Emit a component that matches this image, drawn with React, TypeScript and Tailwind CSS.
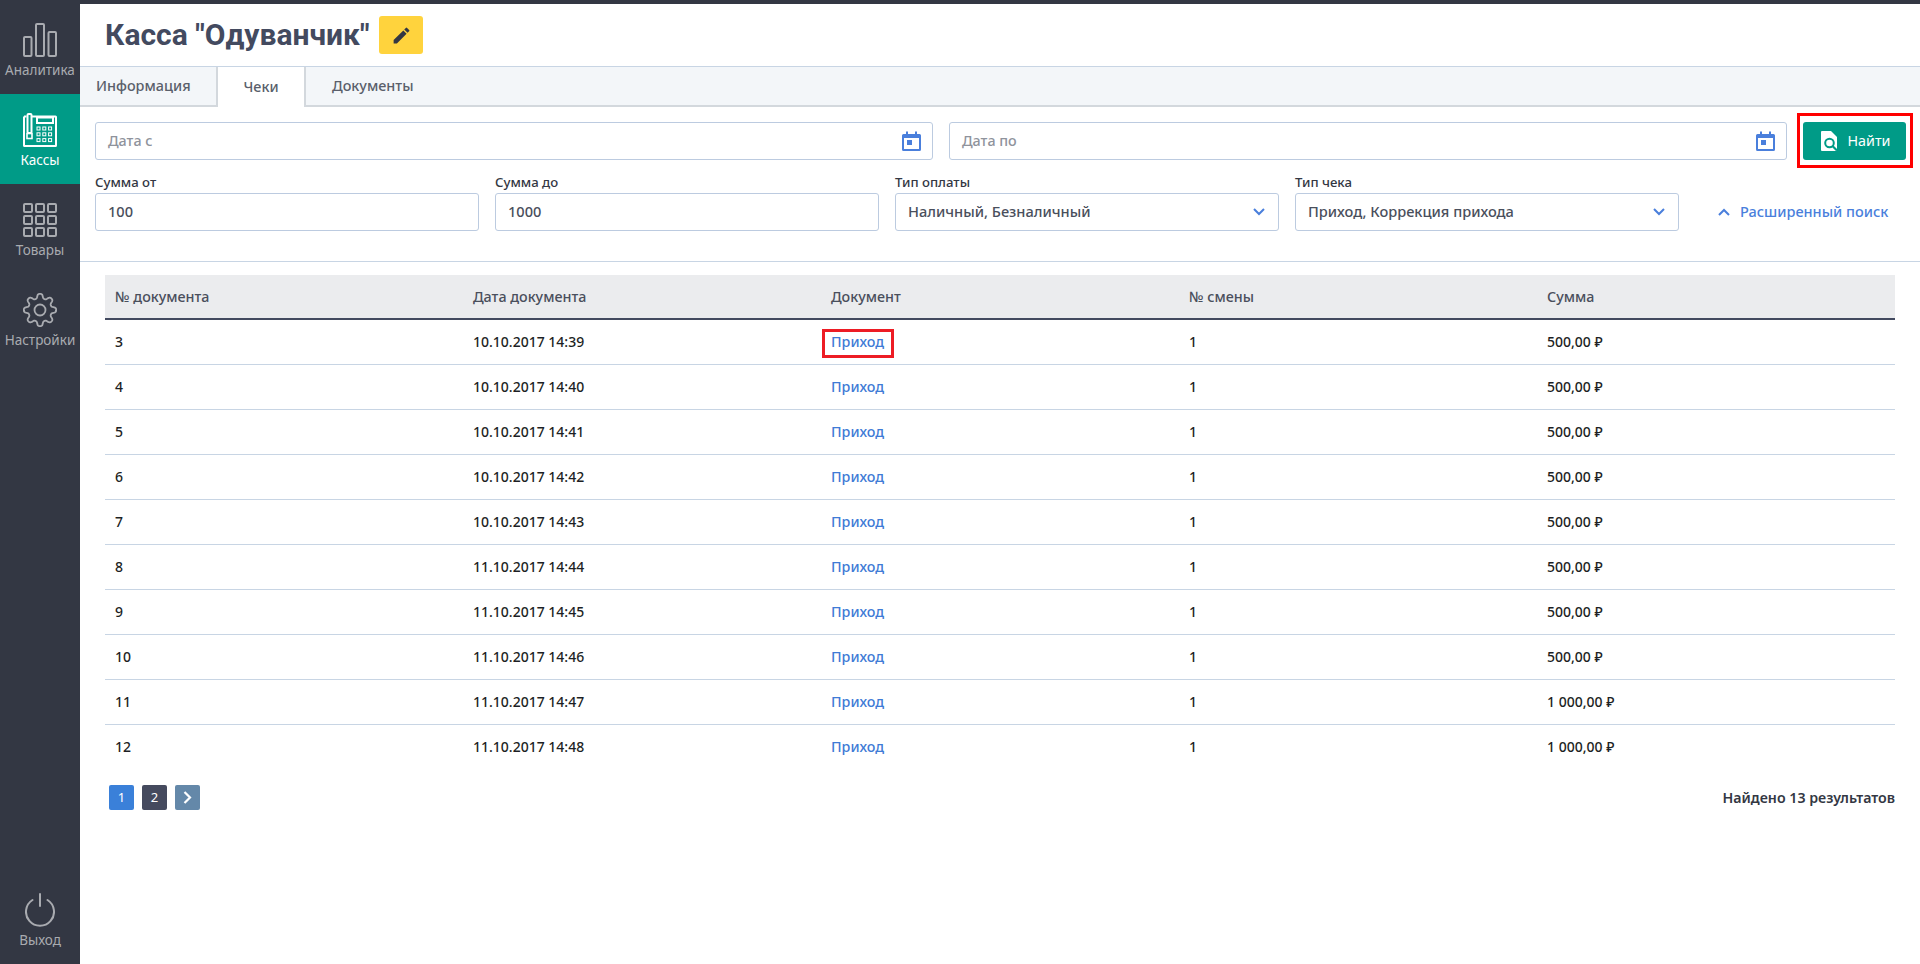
import React from "react";

const NS = "font-['Noto_Sans',sans-serif]";

function Analytics() {
  return (
    <svg width="34" height="34" viewBox="0 0 34 34" fill="none" stroke="currentColor" strokeWidth="2">
      <rect x="1" y="14" width="7.500" height="19" rx="1" />
      <rect x="13" y="1" width="8" height="32" rx="1" />
      <rect x="25.500" y="9" width="7.500" height="24" rx="1" />
    </svg>
  );
}
function Phone() {
  const keys: React.ReactNode[] = [];
  for (let r = 0; r < 3; r++)
    for (let c = 0; c < 3; c++)
      keys.push(<rect key={`${r}-${c}`} x={14 + c * 5.800} y={14 + r * 5.800} width="3" height="3" fill="none" stroke="#fff" strokeWidth="1" />);
  return (
    <svg width="34" height="34" viewBox="0 0 34 34" fill="none">
      <path d="M1 3.500h2.500M8.500 3.500h24a.5.5 0 0 1 .5.5v28.500a.5.5 0 0 1-.5.5H1.500a.5.5 0 0 1-.5-.5V3.500" stroke="#fff" strokeWidth="2" />
      <rect x="4.500" y="1" width="4" height="19" rx="1" stroke="#fff" strokeWidth="2" />
      <rect x="14" y="4.500" width="16" height="5.500" stroke="#fff" strokeWidth="2" />
      <rect x="4" y="20.500" width="5" height="5" stroke="#fff" strokeWidth="1.600" />
      {keys}
    </svg>
  );
}
function Goods() {
  const cells: React.ReactNode[] = [];
  for (let r = 0; r < 3; r++)
    for (let c = 0; c < 3; c++)
      cells.push(<rect key={`${r}-${c}`} x={1 + c * 12} y={1 + r * 12} width="8" height="8" rx="1" />);
  return (
    <svg width="34" height="34" viewBox="0 0 34 34" fill="none" stroke="currentColor" strokeWidth="2">
      {cells}
    </svg>
  );
}
function Gear() {
  const pts: string[] = [];
  for (let i = 0; i < 240; i++) {
    const t = (i / 240) * Math.PI * 2;
    const k = Math.tanh(Math.cos(8 * t) * 1.600) / Math.tanh(1.600);
    const r = 14 + 2.200 * k;
    pts.push(`${(17 + r * Math.cos(t)).toFixed(2)},${(17 + r * Math.sin(t)).toFixed(2)}`);
  }
  return (
    <svg width="34" height="34" viewBox="0 0 34 34" fill="none" stroke="currentColor" strokeWidth="1.800" strokeLinejoin="round">
      <polygon points={pts.join(" ")} />
      <circle cx="17" cy="17" r="5.500" />
    </svg>
  );
}
function Power() {
  return (
    <svg width="30" height="34" viewBox="0 0 30 34" fill="none" stroke="currentColor" strokeWidth="2" strokeLinecap="round">
      <path d="M15 1v12" />
      <path d="M7.500 7a14 14 0 1 0 15 0" />
    </svg>
  );
}
function Pencil() {
  return (
    <svg width="21" height="21" viewBox="0 0 24 24" fill="#333743">
      <path d="M3 17.250V21h3.750L17.810 9.940l-3.750-3.750L3 17.250zM20.710 7.040a1 1 0 0 0 0-1.410l-2.340-2.340a1 1 0 0 0-1.410 0l-1.830 1.830 3.750 3.750 1.830-1.830z" />
    </svg>
  );
}
function Calendar() {
  return (
    <svg width="19" height="20" viewBox="0 0 19 20" className="shrink-0">
      <path d="M1.500 3H4V0.500h2V3h7V0.500h2V3h2.500A1.500 1.500 0 0 1 19 4.500v14a1.500 1.500 0 0 1-1.500 1.500h-16A1.500 1.500 0 0 1 0 18.500v-14A1.500 1.500 0 0 1 1.500 3zM2 7v11h15V7z" fill="#4a7fdc" />
      <rect x="5" y="9" width="5" height="5" fill="#4a7fdc" />
    </svg>
  );
}
function Chevron({ up }: { up?: boolean }) {
  return (
    <svg width="12" height="8" viewBox="0 0 12 8" fill="none" stroke="#4a7fdc" strokeWidth="2" className="shrink-0">
      <path d={up ? "M1 7l5-5 5 5" : "M1 1l5 5 5-5"} />
    </svg>
  );
}
function DocSearch() {
  return (
    <svg width="18" height="20" viewBox="0 0 18 20" className="shrink-0">
      <path d="M0 1a1 1 0 0 1 1-1h9l6 6v13a1 1 0 0 1-1 1H1a1 1 0 0 1-1-1z" fill="#fff" />
      <circle cx="8.500" cy="12" r="4.300" fill="none" stroke="#009b87" strokeWidth="2" />
      <path d="M11.500 15l4.500 4.500" stroke="#009b87" strokeWidth="2.200" />
    </svg>
  );
}

function NavItem({ icon, label, active }: { icon: React.ReactNode; label: string; active?: boolean }) {
  return (
    <div className={`flex h-[90px] flex-col items-center pt-[19px] ${active ? "bg-[#009b87] text-white" : "text-[#a9abb0]"}`}>
      {icon}
      <span className="mt-[3px] text-[13.500px] leading-[20px] whitespace-nowrap">{label}</span>
    </div>
  );
}

function DateField({ placeholder }: { placeholder: string }) {
  return (
    <div className="flex h-[38px] flex-1 items-center justify-between rounded-[3px] border border-[#bccbe0] pr-[11px] pl-[12px]">
      <span className="text-[14.300px] font-medium text-[#8f939c]">{placeholder}</span>
      <Calendar />
    </div>
  );
}

function Field({ label, value, select }: { label: string; value: string; select?: boolean }) {
  return (
    <div className="w-[384px]">
      <div className="h-[19px] text-[13.200px] leading-[16px] font-medium text-[#333743]">{label}</div>
      <div className="flex h-[38px] items-center justify-between rounded-[3px] border border-[#bccbe0] pr-[13px] pl-[12px]">
        <span className="text-[14.600px] font-medium text-[#4a4f5c]">{value}</span>
        {select && <Chevron />}
      </div>
    </div>
  );
}

const rows: [string, string, string][] = [
  ["3", "10.10.2017 14:39", "500,00 ₽"],
  ["4", "10.10.2017 14:40", "500,00 ₽"],
  ["5", "10.10.2017 14:41", "500,00 ₽"],
  ["6", "10.10.2017 14:42", "500,00 ₽"],
  ["7", "10.10.2017 14:43", "500,00 ₽"],
  ["8", "11.10.2017 14:44", "500,00 ₽"],
  ["9", "11.10.2017 14:45", "500,00 ₽"],
  ["10", "11.10.2017 14:46", "500,00 ₽"],
  ["11", "11.10.2017 14:47", "1 000,00 ₽"],
  ["12", "11.10.2017 14:48", "1 000,00 ₽"],
];

export default function App() {
  return (
    <div className={`flex h-[964px] flex-col overflow-hidden bg-white ${NS}`}>
      <div className="h-[4px] bg-[#333743]" />
      <div className="flex flex-1">
        <aside className="flex w-[80px] shrink-0 flex-col justify-between bg-[#333743]">
          <div>
            <NavItem icon={<Analytics />} label="Аналитика" />
            <NavItem icon={<Phone />} label="Кассы" active />
            <NavItem icon={<Goods />} label="Товары" />
            <NavItem icon={<Gear />} label="Настройки" />
          </div>
          <div className="flex flex-col items-center pb-[14px] text-[#a9abb0]">
            <Power />
            <span className="mt-[3px] text-[13.500px] leading-[20px]">Выход</span>
          </div>
        </aside>
        <main className="min-w-0 flex-1">
          <div className="flex h-[62px] items-center pl-[25px]">
            <h1 className="font-['Roboto',sans-serif] text-[30px] leading-[38px] font-bold text-[#434a5f]">Касса "Одуванчик"</h1>
            <button className="ml-[10px] flex h-[38px] w-[44px] items-center justify-center rounded-[3px] bg-[#ffd33d]">
              <Pencil />
            </button>
          </div>
          <div className="flex h-[41px] border-t border-b-2 border-t-[#c8d5e4] border-b-[#d3d8dd] bg-[#f3f6f9] text-[14.400px] font-medium text-[#5a5f6b]">
            <div className="flex w-[138px] items-center border-r-2 border-[#d3d8dd] pl-[16px]">Информация</div>
            <div className="mb-[-2px] flex w-[88px] items-center justify-center border-r-2 border-[#d3d8dd] bg-white">Чеки</div>
            <div className="flex items-center pl-[26px]">Документы</div>
          </div>
          <div className="border-b border-[#c8d5e4] pr-[14px] pb-[30px] pl-[15px]">
            <div className="flex items-start gap-[16px] pt-[15px]">
              <DateField placeholder="Дата с" />
              <DateField placeholder="Дата по" />
              <button className="relative flex h-[38px] w-[103px] items-center justify-center gap-[9px] rounded-[3px] bg-[#009b87] pl-[2px] text-[14.300px] text-white">
                <DocSearch />
                Найти
                <span className="absolute -top-[9px] -right-[7px] -bottom-[8px] -left-[6px] border-[3px] border-[#ff0000]" />
              </button>
            </div>
            <div className="mt-[14px] flex items-end gap-[16px]">
              <Field label="Сумма от" value="100" />
              <Field label="Сумма до" value="1000" />
              <Field label="Тип оплаты" value="Наличный, Безналичный" select />
              <Field label="Тип чека" value="Приход, Коррекция прихода" select />
              <div className="ml-[23px] flex h-[38px] items-center gap-[10px] text-[14.500px] font-medium whitespace-nowrap text-[#4a7fdc]">
                <Chevron up />
                Расширенный поиск
              </div>
            </div>
          </div>
          <div className="mt-[13px] mr-[25px] ml-[25px]">
            <div className="grid h-[45px] grid-cols-5 items-center border-b-2 border-[#434a5f] bg-[#ebecee] text-[14.300px] font-medium text-[#4a4f5c]">
              {["№ документа", "Дата документа", "Документ", "№ смены", "Сумма"].map((h) => (
                <div key={h} className="pl-[10px]">{h}</div>
              ))}
            </div>
            {rows.map(([n, d, s], i) => (
              <div key={n} className={`grid h-[45px] grid-cols-5 items-center border-b pb-[2px] text-[14px] font-medium text-[#1d1f24] ${i < rows.length - 1 ? "border-[#c8d5e4]" : "border-transparent"}`}>
                <div className="pl-[10px]">{n}</div>
                <div className="pl-[10px]">{d}</div>
                <div className="pl-[10px]">
                  <span className="relative inline-block text-[14.300px] leading-[20px] text-[#3f7bd6]">
                    Приход
                    {i === 0 && <span className="absolute -top-[3px] -right-[10px] -bottom-[6px] -left-[9px] border-[3px] border-[#ed1c24]" />}
                  </span>
                </div>
                <div className="pl-[10px]">1</div>
                <div className="pl-[10px]">{s}</div>
              </div>
            ))}
            <div className="mt-[15px] flex items-center justify-between">
              <div className="flex gap-[8px] pl-[4px] text-[13px] text-white">
                <div className="flex h-[25px] w-[25px] items-center justify-center rounded-[2px] bg-[#3a80d9]">1</div>
                <div className="flex h-[25px] w-[25px] items-center justify-center rounded-[2px] bg-[#454a5e]">2</div>
                <div className="flex h-[25px] w-[25px] items-center justify-center rounded-[2px] bg-[#6488a9]">
                  <svg width="9" height="13" viewBox="0 0 9 13" fill="none" stroke="#fff" strokeWidth="2.200">
                    <path d="M1.500 1l5.500 5.500-5.500 5.500" />
                  </svg>
                </div>
              </div>
              <div className="text-[14.200px] font-semibold text-[#333743]">Найдено 13 результатов</div>
            </div>
          </div>
        </main>
      </div>
    </div>
  );
}
